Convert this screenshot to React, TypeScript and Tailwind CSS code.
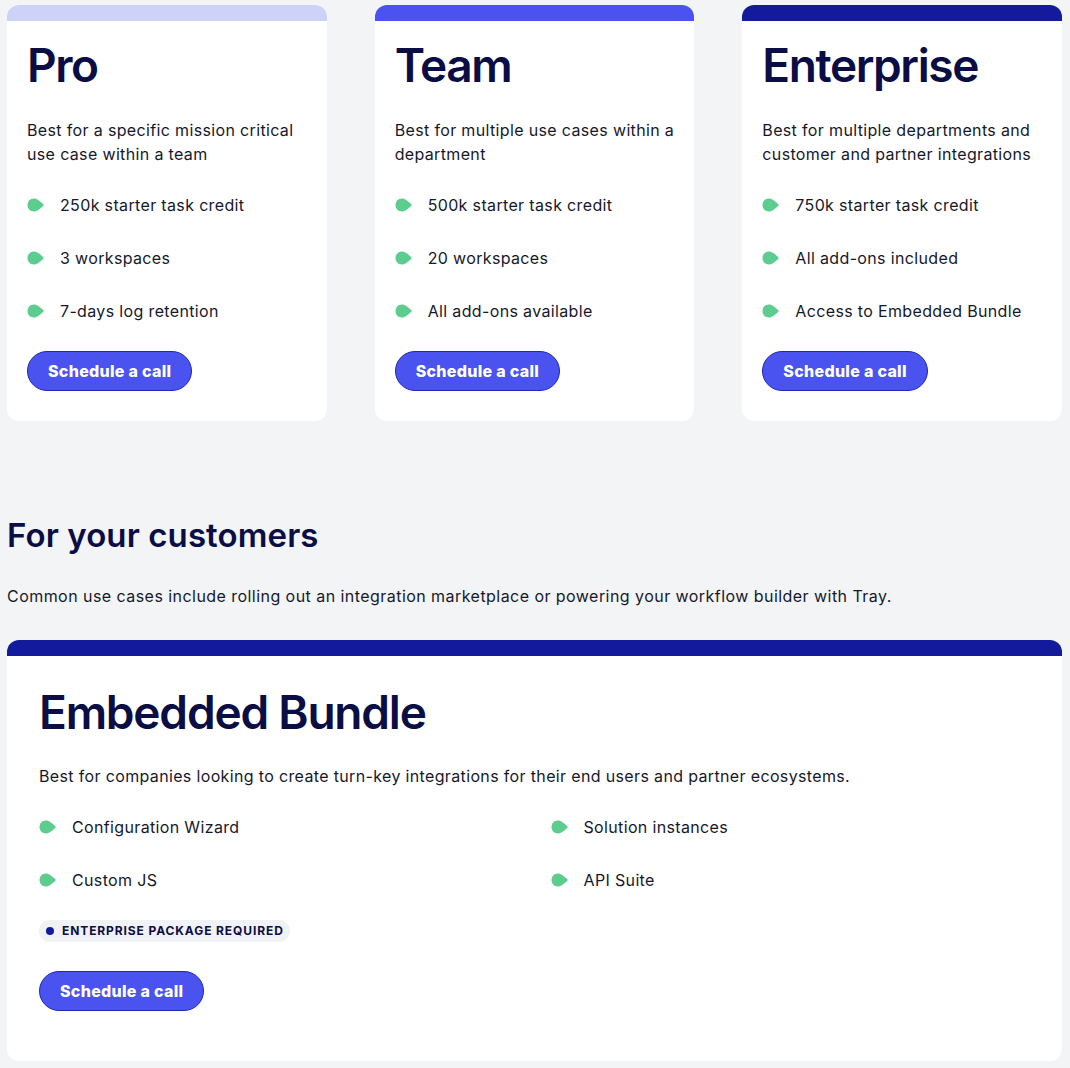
import React from "react";

type Plan = {
  name: string;
  bar: string;
  description: string;
  features: string[];
};

const plans: Plan[] = [
  {
    name: "Pro",
    bar: "bg-[#cfd2f8]",
    description: "Best for a specific mission critical use case within a team",
    features: ["250k starter task credit", "3 workspaces", "7-days log retention"],
  },
  {
    name: "Team",
    bar: "bg-[#4a52ef]",
    description: "Best for multiple use cases within a department",
    features: ["500k starter task credit", "20 workspaces", "All add-ons available"],
  },
  {
    name: "Enterprise",
    bar: "bg-[#131a9c]",
    description: "Best for multiple departments and customer and partner integrations",
    features: ["750k starter task credit", "All add-ons included", "Access to Embedded Bundle"],
  },
];

const Bullet = () => (
  <svg width="18" height="14" viewBox="0 0 18 14" className="shrink-0">
    <path d="M7 0.5 C3.2 0.5 0.5 3.3 0.5 7 C0.5 10.7 3.2 13.5 7 13.5 C10 13.5 13 11 17 7 C13 3 10 0.5 7 0.5 Z" fill="#5ccd8e" />
  </svg>
);

const Feature = ({ text }: { text: string }) => (
  <li className="flex items-center gap-[15px] h-6">
    <Bullet />
    <span>{text}</span>
  </li>
);

const CallButton = () => (
  <button className="self-start h-10 px-5 rounded-full bg-[#4a52ef] border border-[#1f28b8] text-white font-extrabold text-[16px] tracking-[0.3px]">
    Schedule a call
  </button>
);

const PlanCard = ({ plan }: { plan: Plan }) => (
  <section className="bg-white rounded-xl overflow-hidden flex flex-col">
    <div className={`h-4 ${plan.bar}`} />
    <div className="px-5 pt-4 pb-[30px] flex flex-col">
      <h2 className="text-[46px] leading-[56px] font-semibold text-[#0b0d45] tracking-[-1.4px]">
        {plan.name}
      </h2>
      <p className="mt-[25px] leading-6 text-[#16182a]">{plan.description}</p>
      <ul className="mt-[27px] flex flex-col gap-[29px] text-[#16182a]">
        {plan.features.map((f) => (
          <Feature key={f} text={f} />
        ))}
      </ul>
      <div className="mt-7 flex">
        <CallButton />
      </div>
    </div>
  </section>
);

export default function App() {
  return (
    <div
      className="min-h-screen bg-[#f3f4f6] px-[7px] pt-[5px] pb-2 text-[16px] tracking-[0.35px]"
      style={{ fontFamily: "Inter, 'Noto Sans', sans-serif" }}
    >
      {/* Plans */}
      <div className="grid grid-cols-3 gap-12 pr-[1px]">
        {plans.map((p) => (
          <PlanCard key={p.name} plan={p} />
        ))}
      </div>

      {/* For your customers */}
      <h2 className="mt-[94px] text-[33px] leading-10 font-semibold text-[#0b0d45] tracking-[0.1px]">
        For your customers
      </h2>
      <p className="mt-[29px] leading-6 text-[#16182a] tracking-[0.45px]">
        Common use cases include rolling out an integration marketplace or powering your workflow builder with Tray.
      </p>

      <section className="mt-8 mr-[1px] bg-white rounded-xl overflow-hidden flex flex-col">
        <div className="h-4 bg-[#131a9c]" />
        <div className="px-8 pt-[28px] pb-[50px] flex flex-col">
          <h2 className="text-[46px] leading-[56px] font-semibold text-[#0b0d45] tracking-[-1.2px]">
            Embedded Bundle
          </h2>
          <p className="mt-[24px] leading-6 text-[#16182a]">
            Best for companies looking to create turn-key integrations for their end users and partner ecosystems.
          </p>
          <ul className="mt-[27px] grid grid-cols-2 gap-x-8 gap-y-[29px] text-[#16182a]">
            <Feature text="Configuration Wizard" />
            <Feature text="Solution instances" />
            <Feature text="Custom JS" />
            <Feature text="API Suite" />
          </ul>
          <div className="mt-[28px] flex">
            <span className="flex items-center gap-[8px] h-[22px] pl-[7px] pr-[6px] rounded-full bg-[#f1f2f6] text-[12px] font-bold tracking-[0.9px] text-[#0b0d45]">
              <span className="w-2 h-2 rounded-full bg-[#131a9c]" />
              ENTERPRISE PACKAGE REQUIRED
            </span>
          </div>
          <div className="mt-[29px] flex">
            <CallButton />
          </div>
        </div>
      </section>
    </div>
  );
}
